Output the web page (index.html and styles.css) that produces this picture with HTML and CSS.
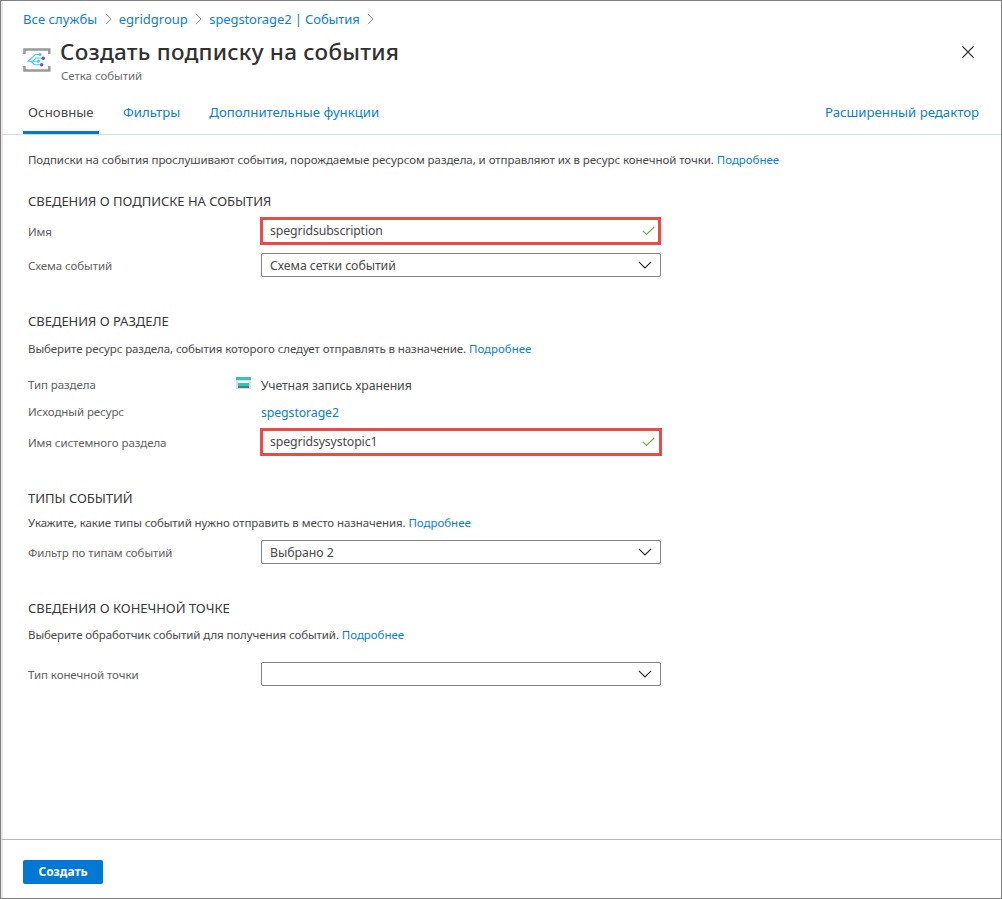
FILE: index.html
```html
<!DOCTYPE html>
<html lang="ru">
<head>
<meta charset="utf-8">
<title>Создать подписку на события</title>
<link rel="stylesheet" href="styles.css">
</head>
<body>
<svg class="defs" aria-hidden="true">
  <symbol id="sep" viewBox="0 0 7 12"><path d="M1 .8 6 6 1 11.2" fill="none" stroke="#8a8a8a" stroke-width="1"/></symbol>
  <symbol id="down" viewBox="0 0 14 8"><path d="M.9 .8 7 6.900 13.100 .8" fill="none" stroke="#222" stroke-width="1.100"/></symbol>
  <symbol id="check" viewBox="0 0 13 10"><path d="M.8 4.800 4.500 8.500 12.200 1" fill="none" stroke="#6ab04c" stroke-width="1.200"/></symbol>
</svg>
<div class="blade">
  <header class="header">
    <nav class="crumbs">
      <a>Все службы</a><svg class="sep"><use href="#sep"/></svg>
      <a class="crumb-group">egridgroup</a><svg class="sep"><use href="#sep"/></svg>
      <a class="crumb-last">spegstorage2 | События</a><svg class="sep"><use href="#sep"/></svg>
    </nav>
    <div class="heading">
      <svg class="logo" viewBox="0 0 28 24">
        <path d="M1.400 6V1.400H26.300V6M1.400 18V22.600H26.300V18" fill="none" stroke="#999" stroke-width="2.500"/>
        <path d="M16.500 6.500H12.500L5 13.300H9.500L13 10H20M9.500 13.300H15.300M5 13.300H8L11.500 16.700H18.500" fill="none" stroke="#3fd0ee" stroke-width="1.100"/>
        <g fill="#3fd0ee"><circle cx="17" cy="6.500" r="1.600"/><circle cx="15.500" cy="13.300" r="1.500"/></g>
        <g fill="#7150bb"><circle cx="20.300" cy="10.200" r="1.700"/><circle cx="18.700" cy="16.800" r="1.700"/></g>
      </svg>
      <div class="titles">
        <h1 class="title">Создать подписку на события</h1>
        <div class="subtitle">Сетка событий</div>
      </div>
      <svg class="close" viewBox="0 0 12 12"><path d="M.4 .4 11.600 11.600M11.600 .4 .4 11.600" stroke="#222" stroke-width="1.200"/></svg>
    </div>
    <nav class="tabs">
      <a class="tab active">Основные</a>
      <a class="tab filters">Фильтры</a>
      <a class="tab">Дополнительные функции</a>
      <a class="tab advanced">Расширенный редактор</a>
    </nav>
  </header>

  <main class="content">
    <p class="text intro">Подписки на события прослушивают события, порождаемые ресурсом раздела, и отправляют их в ресурс конечной точки. <a>Подробнее</a></p>

    <section class="section subscription">
      <h2 class="section-title">СВЕДЕНИЯ О ПОДПИСКЕ НА СОБЫТИЯ</h2>
      <div class="row row-name">
        <label class="label">Имя</label>
        <div class="input"><span>spegridsubscription</span><svg class="check"><use href="#check"/></svg></div>
      </div>
      <div class="row row-schema">
        <label class="label">Схема событий</label>
        <div class="select"><span>Схема сетки событий</span><svg class="down"><use href="#down"/></svg></div>
      </div>
    </section>

    <section class="section topic">
      <h2 class="section-title">СВЕДЕНИЯ О РАЗДЕЛЕ</h2>
      <p class="text">Выберите ресурс раздела, события которого следует отправлять в назначение. <a>Подробнее</a></p>
      <div class="row row-type">
        <label class="label with-icon">Тип раздела
          <svg class="storage" viewBox="0 0 15 12">
            <path d="M0 3H15V12H0Z" fill="#dcdcdc"/>
            <path d="M0 0H15V3H0Z" fill="#32c5b4"/>
            <path d="M2 4H13V6H2Z" fill="#fff"/>
            <path d="M2 6H13V9H2Z" fill="#32c5b4"/>
            <path d="M2 9H13V11H2Z" fill="#3c8581"/>
          </svg>
        </label>
        <span class="value">Учетная запись хранения</span>
      </div>
      <div class="row row-source">
        <label class="label">Исходный ресурс</label>
        <a class="value">spegstorage2</a>
      </div>
      <div class="row row-system">
        <label class="label">Имя системного раздела</label>
        <div class="input wide"><span>spegridsysystopic1</span><svg class="check"><use href="#check"/></svg></div>
      </div>
    </section>

    <section class="section types">
      <h2 class="section-title">ТИПЫ СОБЫТИЙ</h2>
      <p class="text">Укажите, какие типы событий нужно отправить в место назначения. <a>Подробнее</a></p>
      <div class="row row-filter">
        <label class="label">Фильтр по типам событий</label>
        <div class="select"><span>Выбрано 2</span><svg class="down"><use href="#down"/></svg></div>
      </div>
    </section>

    <section class="section endpoint">
      <h2 class="section-title">СВЕДЕНИЯ О КОНЕЧНОЙ ТОЧКЕ</h2>
      <p class="text">Выберите обработчик событий для получения событий. <a>Подробнее</a></p>
      <div class="row row-endpoint">
        <label class="label">Тип конечной точки</label>
        <div class="select"><span></span><svg class="down"><use href="#down"/></svg></div>
      </div>
    </section>
  </main>

  <footer class="footer"><button class="create">Создать</button></footer>
</div>
</body>
</html>
```
FILE: styles.css
```css
* { box-sizing: border-box; }
body { margin: 0; font-family: "Noto Sans", "Open Sans", sans-serif; color: #484848; background: #fff; }
h1, h2, p { margin: 0; }
a { color: #0a80cc; }
.defs { display: none; }

.blade { display: flex; flex-direction: column; height: 899px; border: 1px solid #808080; }
.blade > * { border-left: 2px solid #e9e7e7; }

.header { display: flex; flex-direction: column; height: 134px; padding-top: 9px; border-bottom: 1px solid #d5dde3; }
.crumbs { display: flex; align-items: center; height: 18px; padding-left: 20px; font-size: 13px; line-height: 18px; letter-spacing: .08px; }
.crumb-group { letter-spacing: 0; }
.crumb-last { letter-spacing: -.11px; }
.sep { width: 7px; height: 12px; margin: 0 7px 0 7.500px; }
.heading { display: flex; height: 56px; padding: 8px 27px 0 20px; }
.logo { width: 28px; height: 24px; margin-top: 12px; }
.titles { margin-left: 9px; flex: 1; }
.title { font-size: 22.5px; line-height: 31px; font-weight: 500; letter-spacing: .25px; color: #303030; }
.subtitle { margin: 1px 0 0 1px; font-size: 11.5px; line-height: 15px; letter-spacing: -.05px; color: #6c6c6c; }
.close { width: 12px; height: 12px; margin-top: 10px; }
.tabs { display: flex; flex: 1; margin-top: 17px; padding: 0 17px 0 20px; }
.tab { padding: 2px 5px 0; font-size: 13.2px; line-height: 18px; }
.tab.active { width: 76px; color: #484848; border-bottom: 3px solid #0078d4; letter-spacing: .05px; }
.filters { margin: 0 19px 0 19px; }
.advanced { margin-left: auto; }

.content { flex: 1; padding: 17px 0 0 25px; }
.text { font-size: 11.5px; line-height: 16px; height: 16px; letter-spacing: -.09px; }
.text.intro { letter-spacing: -.06px; }
.text a { letter-spacing: -.03px; }
.section-title { height: 18px; font-size: 13px; line-height: 18px; font-weight: 400; letter-spacing: -.02px; color: #383838; }
.subscription { margin-top: 24px; }
.topic { margin-top: 35px; }
.topic .text { margin-top: 11px; }
.types { margin-top: 33px; }
.types .text { margin-top: 8px; }
.endpoint { margin-top: 35px; }
.endpoint .text { margin-top: 10px; }

.row { display: flex; align-items: center; }
.row-name { height: 28px; margin-top: 7px; }
.row-schema { margin-top: 8px; }
.row-type { height: 20px; margin-top: 17px; }
.row-source { height: 20px; margin-top: 7px; }
.row-system { height: 28px; margin-top: 7px; }
.row-filter { margin-top: 9px; }
.row-endpoint { margin-top: 19px; }

.label { width: 233px; padding-top: 2px; font-size: 11.5px; line-height: 16px; letter-spacing: -.08px; color: #606060; }
.with-icon { display: flex; justify-content: space-between; padding-right: 10px; }
.storage { width: 15px; height: 12px; }
.value { padding-top: 4px; font-size: 12.3px; line-height: 18px; letter-spacing: -.09px; }
.input, .select { display: flex; justify-content: space-between; align-items: center; width: 400px; height: 24px; border: 1px solid #858585; border-radius: 2px; padding: 1px 8px 0 8px; font-size: 12.3px; line-height: 22px; letter-spacing: -.05px; }
.input { width: 401px; height: 28px; margin-left: -1px; border: 3px solid #e84c46; border-radius: 0; padding: 0 3px 0 7px; letter-spacing: -.12px; }
.input.wide { width: 402px; padding-right: 4px; }
.check { width: 13px; height: 10px; }
.down { width: 14px; height: 8px; margin-bottom: 1px; }

.footer { height: 59px; padding: 20px 0 0 20px; border-top: 1px solid #b9b9b9; }
.create { display: block; width: 80px; height: 24px; padding: 0; border: 0; border-radius: 2px; background: #0078d4; color: #fff; font: 700 12px/24px "Noto Sans", "Open Sans", sans-serif; }
```
